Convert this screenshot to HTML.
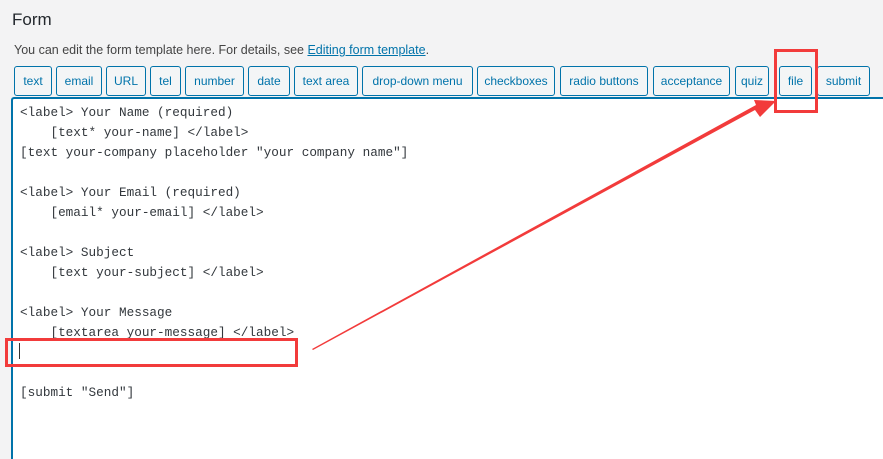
<!DOCTYPE html>
<html><head><style>
body{margin:0;width:883px;height:443px;background:#f3f3f4;font-family:"Liberation Sans",sans-serif;position:relative;overflow:hidden}
h2{position:absolute;left:12px;top:10px;margin:0;font-size:17px;font-weight:normal;color:#23282d}
.desc{position:absolute;left:14px;top:43px;font-size:12.5px;color:#444}
.desc a{color:#0073aa;text-decoration:underline}
.b{position:absolute;top:66px;border:1px solid #0073aa;border-radius:3px;background:#f3f5f6;color:#0073aa;font-size:12px;line-height:28px;text-align:center;box-sizing:border-box;height:30px}
.ta{position:absolute;left:11px;top:97px;width:880px;height:360px;background:#fff;border-top:2px solid #0073aa;border-left:2px solid #0073aa;border-radius:3px 0 0 0}
pre{position:absolute;left:20px;top:103px;margin:0;font-family:"Liberation Mono",monospace;font-size:12.7px;line-height:20px;color:#32373c}
.r{position:absolute;border:3px solid #f23b3b;box-sizing:border-box}
</style></head><body>
<h2>Form</h2>
<div class="desc">You can edit the form template here. For details, see <a>Editing form template</a>.</div>
<div class="b" style="left:14px;width:38px">text</div>
<div class="b" style="left:56px;width:46px">email</div>
<div class="b" style="left:106px;width:40px">URL</div>
<div class="b" style="left:150px;width:31px">tel</div>
<div class="b" style="left:185px;width:59px">number</div>
<div class="b" style="left:248px;width:42px">date</div>
<div class="b" style="left:294px;width:64px">text area</div>
<div class="b" style="left:362px;width:111px">drop-down menu</div>
<div class="b" style="left:477px;width:78px">checkboxes</div>
<div class="b" style="left:560px;width:88px">radio buttons</div>
<div class="b" style="left:653px;width:77px">acceptance</div>
<div class="b" style="left:735px;width:34px">quiz</div>
<div class="b" style="left:779px;width:33px">file</div>
<div class="b" style="left:817px;width:53px">submit</div>
<div class="ta"></div>
<pre>&lt;label&gt; Your Name (required)
    [text* your-name] &lt;/label&gt;
[text your-company placeholder "your company name"]

&lt;label&gt; Your Email (required)
    [email* your-email] &lt;/label&gt;

&lt;label&gt; Subject
    [text your-subject] &lt;/label&gt;

&lt;label&gt; Your Message
    [textarea your-message] &lt;/label&gt;


[submit "Send"]</pre>
<div style="position:absolute;left:19px;top:343px;width:1px;height:16px;background:#333"></div>
<div class="r" style="left:774px;top:49px;width:44px;height:64px"></div>
<div class="r" style="left:5px;top:338px;width:293px;height:29px"></div>
<svg style="position:absolute;left:0;top:0" width="883" height="443">
<polygon points="313,350 755,110 760,117 776,101 754,100 756,105 312,349" fill="#f23b3b"/>
</svg>
</body></html>
